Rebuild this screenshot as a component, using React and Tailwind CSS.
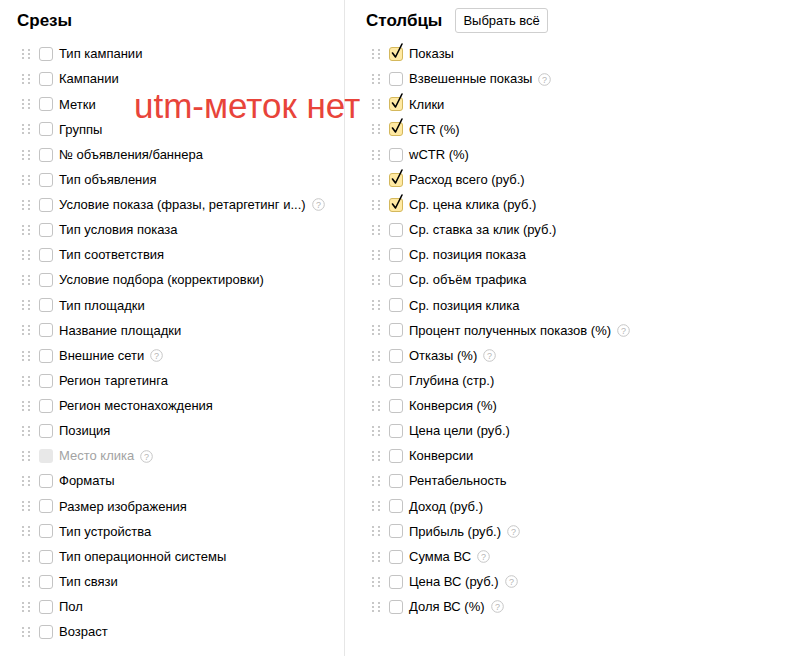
import React from 'react';

const slices = [
  { label: 'Тип кампании' },
  { label: 'Кампании' },
  { label: 'Метки' },
  { label: 'Группы' },
  { label: '№ объявления/баннера' },
  { label: 'Тип объявления' },
  { label: 'Условие показа (фразы, ретаргетинг и...)', hint: true },
  { label: 'Тип условия показа' },
  { label: 'Тип соответствия' },
  { label: 'Условие подбора (корректировки)' },
  { label: 'Тип площадки' },
  { label: 'Название площадки' },
  { label: 'Внешние сети', hint: true },
  { label: 'Регион таргетинга' },
  { label: 'Регион местонахождения' },
  { label: 'Позиция' },
  { label: 'Место клика', hint: true, disabled: true },
  { label: 'Форматы' },
  { label: 'Размер изображения' },
  { label: 'Тип устройства' },
  { label: 'Тип операционной системы' },
  { label: 'Тип связи' },
  { label: 'Пол' },
  { label: 'Возраст' },
];

const columns = [
  { label: 'Показы', checked: true },
  { label: 'Взвешенные показы', hint: true },
  { label: 'Клики', checked: true },
  { label: 'CTR (%)', checked: true },
  { label: 'wCTR (%)' },
  { label: 'Расход всего (руб.)', checked: true },
  { label: 'Ср. цена клика (руб.)', checked: true },
  { label: 'Ср. ставка за клик (руб.)' },
  { label: 'Ср. позиция показа' },
  { label: 'Ср. объём трафика' },
  { label: 'Ср. позиция клика' },
  { label: 'Процент полученных показов (%)', hint: true },
  { label: 'Отказы (%)', hint: true },
  { label: 'Глубина (стр.)' },
  { label: 'Конверсия (%)' },
  { label: 'Цена цели (руб.)' },
  { label: 'Конверсии' },
  { label: 'Рентабельность' },
  { label: 'Доход (руб.)' },
  { label: 'Прибыль (руб.)', hint: true },
  { label: 'Сумма ВС', hint: true },
  { label: 'Цена ВС (руб.)', hint: true },
  { label: 'Доля ВС (%)', hint: true },
];

function Handle() {
  return (
    <svg width="8" height="10" viewBox="0 0 8 10" className="shrink-0">
      {[1, 5, 9].map((y) => (
        <g key={y}>
          <rect x="0" y={y - 1} width="2" height="2" fill="#c8c8c8" />
          <rect x="6" y={y - 1} width="2" height="2" fill="#c8c8c8" />
        </g>
      ))}
    </svg>
  );
}

function Checkbox({ checked, disabled }) {
  if (disabled) {
    return <span className="block h-[14px] w-[14px] shrink-0 rounded-[3px] bg-[#e8e8e8]" />;
  }
  if (checked) {
    return (
      <span className="relative block h-[14px] w-[14px] shrink-0 rounded-[3px] border border-[#d4b85c] bg-[#ffe9a3]">
        <svg
          width="16"
          height="18"
          viewBox="0 0 16 18"
          className="absolute left-[-1px] top-[-6px] overflow-visible"
        >
          <path d="M3.5 11 L6.5 15 L13 2" fill="none" stroke="#000" strokeWidth="1.6" strokeLinecap="round" strokeLinejoin="round" />
        </svg>
      </span>
    );
  }
  return <span className="block h-[14px] w-[14px] shrink-0 rounded-[3px] border border-[#c4c4c4] bg-white" />;
}

function Hint() {
  return (
    <svg width="13" height="13" viewBox="0 0 13 13" className="ml-[6px] shrink-0">
      <circle cx="6.5" cy="6.5" r="5.8" fill="none" stroke="#c6c6c6" strokeWidth="1" />
      <text x="6.5" y="9.6" textAnchor="middle" fontSize="9" fill="#b5b5b5" fontFamily="Liberation Sans, Arial, sans-serif">?</text>
    </svg>
  );
}

function Row({ item }) {
  return (
    <li className="flex h-[25.13px] items-center">
      <Handle />
      <span className="ml-[9px]">
        <Checkbox checked={item.checked} disabled={item.disabled} />
      </span>
      <span className={`ml-[6px] whitespace-nowrap text-[13px] ${item.disabled ? 'text-[#a3a3a3]' : 'text-black'}`}>
        {item.label}
      </span>
      {item.hint ? <Hint /> : null}
    </li>
  );
}

export default function App() {
  return (
    <div className="relative flex h-[656px] w-[802px] overflow-hidden bg-white font-['Liberation_Sans',Arial,sans-serif]">
      <section className="w-[345px] shrink-0 border-r border-[#e6e6e6] pl-[17px] pt-[9px]">
        <h2 className="h-[23px] text-[17px] font-bold leading-[23px] text-black">Срезы</h2>
        <ul className="mt-[9.5px] pl-[5px]">
          {slices.map((item) => (
            <Row key={item.label} item={item} />
          ))}
        </ul>
      </section>

      <section className="flex-1 pl-[21px] pt-[9px]">
        <div className="flex h-[23px] items-center gap-[13px]">
          <h2 className="text-[17px] font-bold leading-[23px] text-black">Столбцы</h2>
          <button className="h-[25px] rounded-[3px] border border-[#cfcfcf] bg-white px-[7px] text-[13px] text-black">
            Выбрать всё
          </button>
        </div>
        <ul className="mt-[9.5px] pl-[6px]">
          {columns.map((item) => (
            <Row key={item.label} item={item} />
          ))}
        </ul>
      </section>

      <div className="pointer-events-none absolute left-[134px] top-[86px] text-[35px] leading-[40px] text-[#e8443a]">
        utm-меток нет
      </div>
    </div>
  );
}
